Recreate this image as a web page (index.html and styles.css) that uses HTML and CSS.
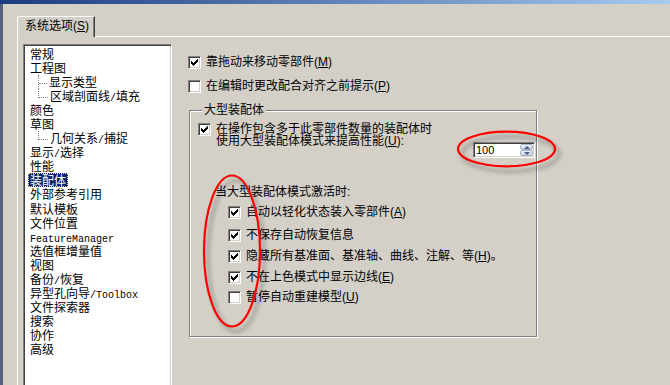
FILE: index.html
```html
<!DOCTYPE html>
<html lang="zh-CN">
<head>
    <meta charset="UTF-8">
    <title>系统选项</title>
    <link rel="stylesheet" href="styles.css">
</head>
<body>

<div class="titlebar"></div>
<div class="window">
    <div class="edge"></div>
    <div class="dialog">
        <div class="tabs">
            <div class="tab">系统选项(<u>S</u>)</div>
        </div>

        <div class="panel">
            <ul class="tree">
                <li>常规</li>
                <li>工程图
                    <ul class="sub">
                        <li>显示类型</li>
                        <li>区域剖面线<span class="en">/</span>填充</li>
                    </ul>
                </li>
                <li>颜色</li>
                <li>草图
                    <ul class="sub">
                        <li>几何关系<span class="en">/</span>捕捉</li>
                    </ul>
                </li>
                <li>显示<span class="en">/</span>选择</li>
                <li>性能</li>
                <li><span class="sel">装配体</span></li>
                <li>外部参考引用</li>
                <li>默认模板</li>
                <li>文件位置</li>
                <li><span class="en">FeatureManager</span></li>
                <li>选值框增量值</li>
                <li>视图</li>
                <li>备份<span class="en">/</span>恢复</li>
                <li>异型孔向导<span class="en">/Toolbox</span></li>
                <li>文件探索器</li>
                <li>搜索</li>
                <li>协作</li>
                <li>高级</li>
            </ul>

            <div class="options">
                <div class="row r1">
                    <span class="cb"><svg width="7" height="7" viewBox="0 0 7 7"><path d="M0 2H1V3H2V4H3V3H4V2H5V1H6V0H7V3H6V4H5V5H4V6H3V7H2V6H1V5H0Z"/></svg></span>
                    <span>靠拖动来移动零部件(<u>M</u>)</span>
                </div>
                <div class="row r2">
                    <span class="cb"></span>
                    <span>在编辑时更改配合对齐之前提示(<u>P</u>)</span>
                </div>

                <fieldset class="group">
                    <legend>大型装配体</legend>

                    <div class="big">
                        <span class="cb"><svg width="7" height="7" viewBox="0 0 7 7"><path d="M0 2H1V3H2V4H3V3H4V2H5V1H6V0H7V3H6V4H5V5H4V6H3V7H2V6H1V5H0Z"/></svg></span>
                        <span class="big-label">在操作包含多于此零部件数量的装配体时<br>使用大型装配体模式来提高性能(<u>U</u>):</span>
                        <div class="spin">
                            <span class="val">100</span>
                            <span class="btns">
                                <span><i class="up"></i></span>
                                <span><i class="down"></i></span>
                            </span>
                        </div>
                    </div>

                    <div class="note">当大型装配体模式激活时:</div>

                    <div class="row sub-opt a1">
                        <span class="cb"><svg width="7" height="7" viewBox="0 0 7 7"><path d="M0 2H1V3H2V4H3V3H4V2H5V1H6V0H7V3H6V4H5V5H4V6H3V7H2V6H1V5H0Z"/></svg></span>
                        <span>自动以轻化状态装入零部件(<u>A</u>)</span>
                    </div>
                    <div class="row sub-opt a2">
                        <span class="cb"><svg width="7" height="7" viewBox="0 0 7 7"><path d="M0 2H1V3H2V4H3V3H4V2H5V1H6V0H7V3H6V4H5V5H4V6H3V7H2V6H1V5H0Z"/></svg></span>
                        <span>不保存自动恢复信息</span>
                    </div>
                    <div class="row sub-opt a3">
                        <span class="cb"><svg width="7" height="7" viewBox="0 0 7 7"><path d="M0 2H1V3H2V4H3V3H4V2H5V1H6V0H7V3H6V4H5V5H4V6H3V7H2V6H1V5H0Z"/></svg></span>
                        <span>隐藏所有基准面、基准轴、曲线、注解、等(<u>H</u>)。</span>
                    </div>
                    <div class="row sub-opt a4">
                        <span class="cb"><svg width="7" height="7" viewBox="0 0 7 7"><path d="M0 2H1V3H2V4H3V3H4V2H5V1H6V0H7V3H6V4H5V5H4V6H3V7H2V6H1V5H0Z"/></svg></span>
                        <span>不在上色模式中显示边线(<u>E</u>)</span>
                    </div>
                    <div class="row sub-opt a5">
                        <span class="cb"></span>
                        <span>暂停自动重建模型(<u>U</u>)</span>
                    </div>
                </fieldset>
            </div>
        </div>
    </div>
</div>

<!-- red hand-drawn marks over the dialog -->
<svg class="marks" width="670" height="385" viewBox="0 0 670 385">
    <ellipse cx="506.5" cy="149" rx="48.5" ry="17.3"/>
    <ellipse cx="232" cy="251" rx="28" ry="75.5"/>
</svg>

</body>
</html>
```

FILE: styles.css
```css
* {
    box-sizing: border-box;
}
body {
    margin: 0;
    width: 670px;
    height: 385px;
    overflow: hidden;
    position: relative;
    background: #d4d0c8;
    color: #000;
    font-family: "Liberation Sans", "Noto Sans CJK SC", sans-serif;
    font-size: 12px;
}
.titlebar {
    height: 4px;
    background: linear-gradient(to right, #1c3a80, #a6caf0);
}
.window {
    display: flex;
    height: 381px;
}
.edge {
    width: 3px;
    flex: none;
    background: #58617f;
}
.dialog {
    flex: 1;
    padding: 12px 0 0 14px;
    overflow: hidden;
}

/* tab strip */
.tabs {
    display: flex;
}
.tab {
    width: 78px;
    height: 21px;
    padding-left: 7px;
    border: 1px solid #fff;
    border-bottom: none;
    border-right-color: #404040;
    border-top-left-radius: 3px;
    box-shadow: inset -1px 0 #808080;
    line-height: 18px;
    white-space: nowrap;
}
.tabs::after {
    content: '';
    flex: 1;
    border-bottom: 1px solid #fff;
}
.panel {
    display: flex;
    align-items: flex-start;
    height: 348px;
    padding: 7px 0 0 5px;
    border-left: 1px solid #fff;
}

/* left tree */
.tree {
    list-style: none;
    margin: 0;
    flex: none;
    width: 149px;
    height: 341px;
    padding: 2px 0 0 6px;
    background: #fff;
    border: 1px solid;
    border-bottom: none;
    border-color: #808080 #fff #fff #808080;
    box-shadow: inset 1px 1px #404040, inset -1px 0 #d4d0c8;
    font-family: "Noto Sans CJK SC", sans-serif;
    line-height: 14.05px;
    white-space: nowrap;
}
.tree .sub {
    list-style: none;
    margin: 0 0 0 8px;
    padding: 0;
}
.sub li {
    border-left: 1px dotted #808080;
}
.sub li:last-child {
    border-left: none;
}
.sub li::before {
    content: '';
    display: inline-block;
    vertical-align: top;
    width: 8px;
    height: 8px;
    margin-right: 2px;
    border-bottom: 1px dotted #808080;
}
.sub li:last-child::before {
    width: 9px;
    border-left: 1px dotted #808080;
}
.en {
    font-family: "Liberation Mono", monospace;
    font-size: 10px;
    line-height: 0;
}
.sel {
    display: inline-block;
    vertical-align: top;
    margin-left: -2px;
    padding: 0 1px;
    line-height: 12px;
    border: 1px dotted #f5db95;
    background: #0a246a;
    color: #fff;
}

/* right side */
.options {
    flex: 1;
    padding-left: 16px;
}
.row {
    display: flex;
    align-items: center;
    gap: 5px;
    line-height: 14px;
    white-space: nowrap;
}
.r1 {
    margin-top: 11px;
}
.r2 {
    margin-top: 10px;
}
.cb {
    flex: none;
    display: flex;
    align-items: center;
    justify-content: center;
    width: 13px;
    height: 13px;
    background: #fff;
    border: 1px solid;
    border-color: #808080 #fff #fff #808080;
    box-shadow: inset 1px 1px #404040, inset -1px -1px #d4d0c8;
}
.cb svg {
    display: block;
    shape-rendering: crispEdges;
}
.group {
    width: 348px;
    min-width: 0;
    margin: 10px 0 0 1px;
    padding: 6px 0 32px 8px;
    border: 1px solid #808080;
    box-shadow: inset 1px 1px #fff, 1px 1px #fff;
}
.group legend {
    margin-left: 4px;
    padding: 0 2px;
    line-height: 14px;
    background: #d4d0c8;
}
.big {
    display: flex;
    align-items: flex-start;
    line-height: 12px;
    white-space: nowrap;
}
.big-label {
    margin-left: 5px;
}
.spin {
    flex: none;
    display: flex;
    width: 62px;
    height: 16px;
    margin: 19px 1px 0 auto;
    padding: 1px;
    background: #fff;
    border: 1px solid;
    border-color: #808080 #fff #fff #808080;
    box-shadow: inset 1px 1px #404040, inset -1px -1px #d4d0c8;
}
.spin .val {
    flex: 1;
    padding-left: 1px;
    font-size: 11px;
    line-height: 12px;
}
.btns {
    display: flex;
    flex-direction: column;
    width: 13px;
}
.btns span {
    flex: 1;
    display: flex;
    align-items: center;
    justify-content: center;
    border: 1px solid #a7b3cb;
    border-radius: 2px;
    background: linear-gradient(#eef2f9, #c5cfe2);
}
.up,
.down {
    width: 0;
    height: 0;
    border-left: 3px solid transparent;
    border-right: 3px solid transparent;
}
.up {
    border-bottom: 3px solid #4d6185;
}
.down {
    border-top: 3px solid #4d6185;
}
.note {
    margin: 27px 0 0 17px;
    line-height: 14px;
}
.sub-opt {
    margin-left: 30px;
}
.a1 { margin-top: 6px; }
.a2 { margin-top: 9px; }
.a3 { margin-top: 7px; }
.a4 { margin-top: 7px; }
.a5 { margin-top: 6px; }

/* annotation rings */
.marks {
    position: absolute;
    left: 0;
    top: 0;
    pointer-events: none;
    filter: drop-shadow(4px 5px 2px rgba(0, 0, 0, 0.35));
}
.marks ellipse {
    fill: none;
    stroke: #f00;
    stroke-width: 2.2;
}
```
